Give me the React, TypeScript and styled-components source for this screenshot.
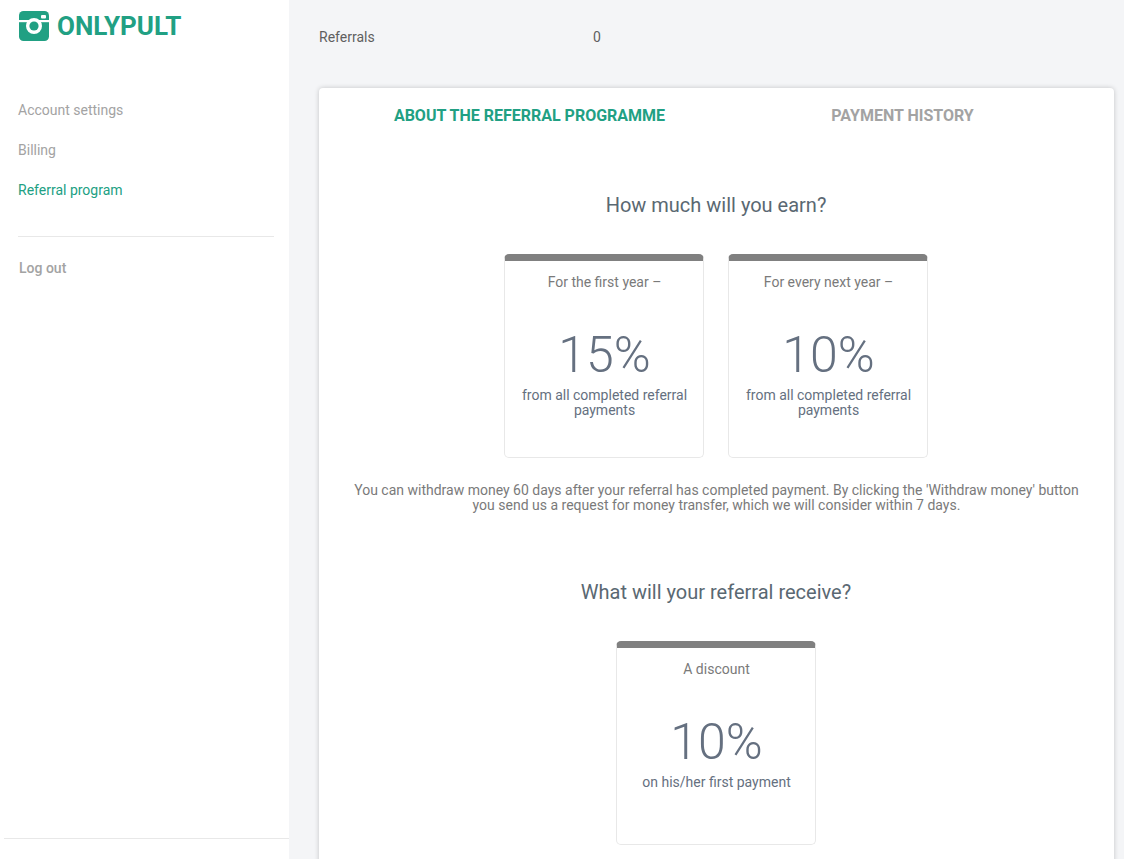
import React from "react";
import styled, { createGlobalStyle } from "styled-components";

const Global = createGlobalStyle`
  html, body { margin: 0; padding: 0; height: 100%; overflow: hidden; background: #f4f5f7; }
  #root { height: 100%; }
  * { box-sizing: border-box; }
`;

const Page = styled.div`
  display: flex;
  width: 1124px;
  height: 859px;
  overflow: hidden;
  font-family: Roboto, "Liberation Sans", sans-serif;
`;

const Sidebar = styled.aside`
  width: 289px;
  flex: none;
  height: 859px;
  background: #fff;
  display: flex;
  flex-direction: column;
  padding-top: 11px;
`;

const Logo = styled.div`
  display: flex;
  align-items: center;
  gap: 8px;
  padding-left: 19px;
  height: 30px;
`;

const LogoText = styled.span`
  font-size: 26px;
  font-weight: 700;
  color: #21a083;
  line-height: 30px;
`;

const Nav = styled.nav`
  display: flex;
  flex-direction: column;
  margin-top: 49px;
  padding-left: 18px;
`;

const NavItem = styled.a<{ $active?: boolean }>`
  height: 40px;
  line-height: 40px;
  font-size: 14px;
  color: ${(p) => (p.$active ? "#21a083" : "#a3a3a3")};
`;

const NavRule = styled.div`
  height: 1px;
  background: #e8e8e8;
  margin: 26px 15px 0 18px;
`;

const LogOut = styled.a`
  margin: 22px 0 0 19px;
  font-size: 14px;
  font-weight: 500;
  line-height: 18px;
  color: #a3a3a3;
`;

const Spacer = styled.div`
  flex: 1;
`;

const FootRule = styled.div`
  height: 1px;
  background: #e8e8e8;
  margin: 0 0 20px 4px;
`;

const Main = styled.main`
  flex: 1;
  min-width: 0;
  padding: 0 10px 0 30px;
`;

const Stat = styled.div`
  display: flex;
  height: 74px;
  align-items: center;
  font-size: 14px;
  color: #5f5f5f;
`;

const StatLabel = styled.span`
  width: 274px;
`;

const Panel = styled.section`
  margin-top: 14px;
  background: #fff;
  border-radius: 4px;
  box-shadow: 0 0 5px rgba(0, 0, 0, 0.2);
  height: 900px;
  width: 795px;
  display: flex;
  flex-direction: column;
  align-items: center;
`;

const Tabs = styled.div`
  display: flex;
  width: 100%;
  height: 53px;
`;

const Tab = styled.div<{ $active?: boolean; $w: number }>`
  width: ${(p) => p.$w}px;
  text-align: center;
  font-size: 16px;
  font-weight: 700;
  line-height: 55px;
  color: ${(p) => (p.$active ? "#21a083" : "#a3a3a3")};
`;

const Heading = styled.h2<{ $top: number }>`
  margin: ${(p) => p.$top}px 1px 0 0;
  font-size: 20px;
  font-weight: 400;
  line-height: 24px;
  color: #5a6872;
`;

const Cards = styled.div`
  display: flex;
  gap: 24px;
  margin: 37px 2px 0 0;
`;

const Card = styled.div`
  width: 200px;
  height: 204px;
  border: 1px solid #e8e8e8;
  border-top: 7px solid #808080;
  border-radius: 5px;
  padding: 13px 15px 0 17px;
  text-align: center;
`;

const CardLabel = styled.div`
  font-size: 14px;
  line-height: 16px;
  color: #7a7a7a;
`;

const Percent = styled.div`
  margin-top: 35px;
  font-size: 50px;
  font-weight: 300;
  line-height: 60px;
  color: #657080;
`;

const CardText = styled.div`
  margin-top: 3px;
  font-size: 14px;
  line-height: 15px;
  color: #657080;
`;

const Note = styled.p`
  margin: 25px 0 0;
  width: 740px;
  text-align: center;
  font-size: 14px;
  line-height: 15px;
  color: #7a7a7a;
`;

const CameraLogo = () => (
  <svg width="30" height="30" viewBox="0 0 30 30" aria-hidden="true">
    <rect width="30" height="30" rx="4.500" fill="#21a083" />
    <rect y="9" width="30" height="2.200" fill="#fff" />
    <circle cx="15" cy="15" r="8" fill="#fff" />
    <circle cx="15" cy="15" r="4.600" fill="#21a083" />
    <rect x="22" y="4" width="5" height="3.500" rx="1" fill="#fff" />
  </svg>
);

export default function App() {
  return (
    <Page>
      <Global />
      <Sidebar>
        <Logo>
          <CameraLogo />
          <LogoText>ONLYPULT</LogoText>
        </Logo>
        <Nav>
          <NavItem>Account settings</NavItem>
          <NavItem>Billing</NavItem>
          <NavItem $active>Referral program</NavItem>
        </Nav>
        <NavRule />
        <LogOut>Log out</LogOut>
        <Spacer />
        <FootRule />
      </Sidebar>
      <Main>
        <Stat>
          <StatLabel>Referrals</StatLabel>
          <span>0</span>
        </Stat>
        <Panel>
          <Tabs>
            <Tab $active $w={421}>ABOUT THE REFERRAL PROGRAMME</Tab>
            <Tab $w={325}>PAYMENT HISTORY</Tab>
          </Tabs>
          <Heading $top={52}>How much will you earn?</Heading>
          <Cards>
            <Card>
              <CardLabel>For the first year –</CardLabel>
              <Percent>15%</Percent>
              <CardText>from all completed referral payments</CardText>
            </Card>
            <Card>
              <CardLabel>For every next year –</CardLabel>
              <Percent>10%</Percent>
              <CardText>from all completed referral payments</CardText>
            </Card>
          </Cards>
          <Note>
            You can withdraw money 60 days after your referral has completed payment. By clicking the 'Withdraw money' button you send us a request for money transfer, which we will consider within 7 days.
          </Note>
          <Heading $top={67}>What will your referral receive?</Heading>
          <Cards>
            <Card>
              <CardLabel>A discount</CardLabel>
              <Percent>10%</Percent>
              <CardText>on his/her first payment</CardText>
            </Card>
          </Cards>
        </Panel>
      </Main>
    </Page>
  );
}
